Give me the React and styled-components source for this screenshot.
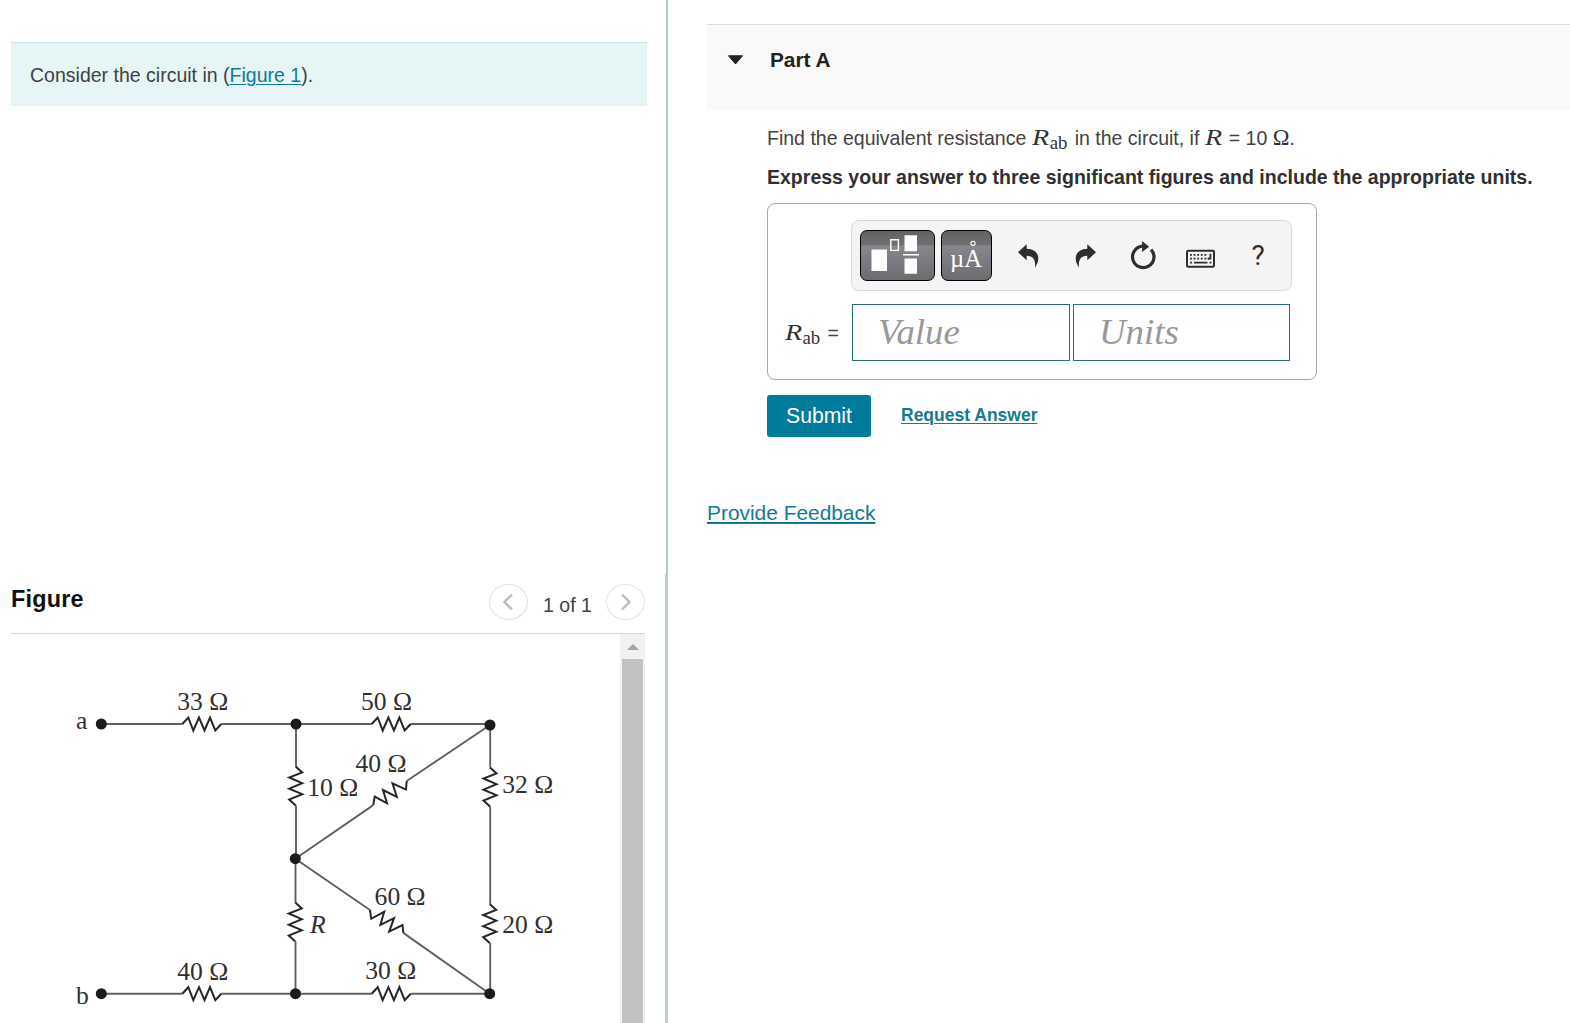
import React from 'react'
import styled, { createGlobalStyle } from 'styled-components'

const GlobalStyle = createGlobalStyle`
  * {
    box-sizing: border-box;
  }

  body {
    margin: 0;
    background: #fff;
    color: #424242;
    font-family: 'Liberation Sans', Arial, sans-serif;
    font-size: 19.52px;
    overflow: hidden;
  }

  p {
    margin: 0;
  }
`

const Page = styled.div`
  display: flex;
  width: 1570px;
  height: 1023px;
`

const LeftPane = styled.div`
  display: flex;
  flex-direction: column;
  width: 665px;
  padding-left: 11px;
`

const Divider = styled.div`
  width: 3px;

  &::before {
    content: '';
    display: block;
    width: 2px;
    height: 574px;
    margin-left: 1px;
    background: #b5cad8;
  }

  &::after {
    content: '';
    display: block;
    height: 449px;
    background: #b8ccda;
  }
`

const Intro = styled.div`
  width: 636px;
  height: 64px;
  margin-top: 42px;
  padding: 20px 19px;
  border-top: 1px solid #cfe3e3;
  background: #e6f5f6;
  line-height: 24px;
`

const Link = styled.a`
  color: #127a96;
  text-decoration: underline;
  text-decoration-thickness: 1px;
  text-underline-offset: 2px;
`

const FigureHeader = styled.div`
  display: flex;
  align-items: flex-start;
  width: 634px;
  height: 50px;
  margin-top: 478px;
  border-bottom: 1px solid #d6d6d6;
`

const FigureTitle = styled.div`
  flex: 1;
  color: #111;
  font-size: 23.4px;
  font-weight: bold;
  letter-spacing: 0.2px;
  line-height: 30px;
`

const Pager = styled.div`
  display: flex;
  align-items: center;
`

const PagerCount = styled.div`
  width: 78px;
  padding: 6px 0 0 1px;
  text-align: center;
`

const PagerButton = styled.button`
  display: flex;
  align-items: center;
  justify-content: center;
  width: 39px;
  height: 36px;
  padding: ${props => (props.$next ? '0 0 0 1px' : '0 1px 0 0')};
  border: 1px solid #e2e2e2;
  border-radius: 50%;
  background: #fff;
`

const FigureView = styled.div`
  display: flex;
  width: 634px;
  height: 389px;
`

const Scrollbar = styled.div`
  display: flex;
  flex-direction: column;
  align-items: center;
  width: 25px;
  background: #f1f1f1;
`

const ScrollUp = styled.div`
  display: flex;
  justify-content: center;
  height: 25px;
  padding-top: 10px;
`

const ScrollThumb = styled.div`
  flex: 1;
  width: 21px;
  background: #c1c1c1;
`

const RightPane = styled.div`
  flex: 1;
  padding-left: 39px;
`

const PartHeader = styled.div`
  display: flex;
  height: 86px;
  margin-top: 24px;
  padding: 22px 0 0 20px;
  border-top: 1px solid #dcdcdc;
  background: #f9f9f9;
  color: #222;
  font-size: 20.8px;
  font-weight: bold;
  line-height: 25px;

  & > svg {
    margin: 8px 26px 0 0;
  }
`

const PartBody = styled.div`
  padding: 15px 0 0 60px;
`

const Question = styled.p`
  height: 26px;
  line-height: 26px;
  white-space: nowrap;
`

const Instruction = styled(Question)`
  margin-top: 13px;
  color: #303030;
  font-weight: bold;
`

const MathVar = styled.i`
  display: inline-block;
  width: ${props => props.$width || 18.5}px;
  color: #333;
  font-family: 'Liberation Serif', serif;
  font-size: 22.5px;
  line-height: 20px;
  transform: scaleX(1.25);
  transform-origin: left;
`

const MathSub = styled.span`
  display: inline-block;
  position: relative;
  top: 3.6px;
  width: 19.5px;
  color: #333;
  font-family: 'Liberation Serif', serif;
  font-size: 18.8px;
  line-height: 16px;
`

const Omega = styled.span`
  color: #333;
  font-family: 'Liberation Serif', serif;
  font-size: 22.5px;
  line-height: 20px;
`

const AnswerBox = styled.div`
  width: 550px;
  height: 177px;
  margin-top: 13px;
  padding-top: 16px;
  border: 1px solid #a8a8a8;
  border-radius: 8px;
`

const Toolbar = styled.div`
  display: flex;
  align-items: flex-start;
  width: 441px;
  height: 71px;
  margin-left: 83px;
  padding: 9px 8px;
  border: 1px solid #d8d8d8;
  border-radius: 8px;
  background: #f4f4f4;
`

const PaletteButton = styled.button`
  width: ${props => props.$width}px;
  height: 51px;
  margin-right: 6px;
  padding: 0;
  border: 1px solid #000;
  border-radius: 7px;
  background: linear-gradient(
    #626262 0,
    #707070 14px,
    #88878d 15px,
    #6c6b70 100%
  );

  & > svg {
    display: block;
  }
`

const ToolIcons = styled.div`
  display: grid;
  grid-template-columns: 58px 57px 58px 56px 60px;
  align-items: start;
  justify-items: center;
  margin-left: 1px;
`

const Help = styled.div`
  padding-top: 11px;
  color: #2d2d2d;
  font-family: Roboto, 'Liberation Sans', sans-serif;
  font-size: 28px;
  line-height: 30px;
`

const AnswerRow = styled.div`
  display: flex;
  margin: 13px 0 0 17px;
`

const AnswerLabel = styled.div`
  width: 67px;
  padding-top: 16px;
  line-height: 26px;
  white-space: nowrap;
`

const Field = styled.input`
  width: ${props => props.$width}px;
  height: 57px;
  margin-right: 3px;
  padding: 0 24px 3px 25px;
  border: 1px solid #24717e;
  border-radius: 0;
  background: #fff;
  font-family: 'Liberation Serif', serif;
  font-size: 36.8px;
  font-style: italic;

  &::placeholder {
    color: #999;
    opacity: 1;
  }
`

const Actions = styled.div`
  display: flex;
  margin-top: 15px;
`

const Submit = styled.button`
  width: 104px;
  height: 42px;
  padding: 0;
  border: 0;
  border-radius: 3px;
  background: #007b9c;
  color: #fff;
  font-family: inherit;
  font-size: 21.2px;
`

const RequestLink = styled(Link)`
  margin: 8px 0 0 30px;
  color: #147a8c;
  font-size: 17.5px;
  font-weight: bold;
  line-height: 24px;
`

const Feedback = styled(Link)`
  display: inline-block;
  margin-top: 64px;
  font-size: 20.9px;
  line-height: 24px;
  text-decoration-thickness: 2px;
`

const ZIGZAG = 'M0 0L6 -6.5L11 6.5L16.7 -6.5L22.2 6.5L27.7 -6.5L33 6.5L39 0'

const WIRES = [
  'M101 724H182.3M221.3 724H371.7M410.7 724H490',
  'M101 993.7H182.3M221.3 993.7H371.7M410.7 993.7H490',
  'M296 724V766.5M296 805.5V858.7',
  'M295.5 858.7V902.5M295.5 941.5V993.7',
  'M490.2 725V767.5M490.2 806.5V904M490.2 943V993.7',
  'M295.3 858.7L373.3 805.1M406.7 781L490 725',
  'M295.3 858.7L370 910M403.3 932.9L489.7 993.7',
]

const RESISTORS = [
  'translate(182.3 724)',
  'translate(371.7 724)',
  'translate(182.3 993.7)',
  'translate(371.7 993.7)',
  'translate(295.7 766.5) rotate(90)',
  'translate(295.3 902.5) rotate(90)',
  'translate(490 767.5) rotate(90)',
  'translate(489.7 904) rotate(90)',
]

// the slanted resistors lean a little, so they have their own points
const SLANTED = [
  'M373.3 805L374.7 796.5L387 803.3L383 790L396.8 796.8L392.5 783.3L406 789.6L406.7 781',
  'M370 910L371.2 918.8L384.2 911.8L380.4 924.8L394 918.2L389.2 931.6L402.5 925L403.3 932.9',
]

const NODES = [
  [101.3, 724],
  [296, 724],
  [490, 725],
  [295.3, 858.7],
  [101.3, 993.7],
  [295.5, 993.7],
  [489.7, 993.7],
]

const LABELS = [
  { x: 76, y: 728.7, text: 'a' },
  { x: 76, y: 1004, text: 'b' },
  { x: 177.3, y: 710.4, text: '33 Ω' },
  { x: 361, y: 710.4, text: '50 Ω' },
  { x: 355.4, y: 772.1, text: '40 Ω' },
  { x: 307.2, y: 795.8, text: '10 Ω' },
  { x: 502.2, y: 793.1, text: '32 Ω' },
  { x: 374.6, y: 904.8, text: '60 Ω' },
  { x: 310, y: 932.7, text: 'R', italic: true },
  { x: 502.2, y: 932.5, text: '20 Ω' },
  { x: 365.3, y: 979.4, text: '30 Ω' },
  { x: 177.3, y: 980.4, text: '40 Ω' },
]

const CircuitLabel = styled.text`
  fill: #303030;
  font-family: 'Liberation Serif', serif;
  font-size: 25.6px;
  font-style: ${props => (props.$italic ? 'italic' : 'normal')};
`

function Circuit() {
  return (
    <svg width="609" height="389" viewBox="11 634 609 389">
      <path d={WIRES.join('')} fill="none" stroke="#606060" strokeWidth="1.9" />
      {RESISTORS.map(transform => (
        <path
          key={transform}
          d={ZIGZAG}
          transform={transform}
          fill="none"
          stroke="#262626"
          strokeWidth="2"
        />
      ))}
      <path d={SLANTED.join('')} fill="none" stroke="#262626" strokeWidth="2" />
      {NODES.map(([x, y]) => (
        <circle key={`${x}-${y}`} cx={x} cy={y} r="5.5" fill="#1c1a1b" />
      ))}
      {LABELS.map(({ x, y, text, italic }) => (
        <CircuitLabel key={`${x}-${y}`} x={x} y={y} $italic={italic}>
          {text}
        </CircuitLabel>
      ))}
    </svg>
  )
}

function Chevron({ right }) {
  return (
    <svg width="10" height="18" viewBox="0 0 10 18">
      <path
        d={right ? 'M1 1.5L8.5 9L1 16.5' : 'M9 1.5L1.5 9L9 16.5'}
        fill="none"
        stroke="#bdbdbd"
        strokeWidth="2.4"
      />
    </svg>
  )
}

function TemplateIcon() {
  return (
    <svg width="73" height="49" viewBox="861 231 73 49">
      <path
        d="M871.5 249.5h15.5v21.5h-15.5zM904.5 235.3h12.5v16h-12.5zM904.5 258.5h12.5v15.2h-12.5zM903 254h16v1.6h-16z"
        fill="#fff"
      />
      <path d="M890.8 239.8h7.6v10.6h-7.6z" fill="none" stroke="#fff" strokeWidth="1.4" />
    </svg>
  )
}

function UnitsIcon() {
  return (
    <svg width="49" height="49" viewBox="942 231 49 49">
      <text
        x="950"
        y="267"
        fill="#fff"
        fontFamily="Liberation Serif, serif"
        fontSize="26"
        textLength="32"
        lengthAdjust="spacingAndGlyphs"
      >
        µA
      </text>
      <circle cx="973" cy="243.3" r="2.1" fill="none" stroke="#fff" strokeWidth="1.1" />
    </svg>
  )
}

function ArrowIcon({ flip }) {
  return (
    <svg
      width="21"
      height="38"
      viewBox="0 -14 21 38"
      transform={flip ? 'scale(-1 1)' : undefined}
    >
      <path
        d="M0 8.3L8.7 0.2V4.8C15.5 5 20.3 8.5 20.3 14.5C20.3 18.5 18.5 21 17 23.7C17.8 17 16 11.9 8.7 11.8V16.2Z"
        fill="#2d2d2d"
      />
    </svg>
  )
}

function ResetIcon() {
  return (
    <svg width="26" height="40" viewBox="1130.5 230.5 26 40">
      <path
        d="M1151.6 250.1A10.7 10.7 0 1 1 1143.3 246.7"
        fill="none"
        stroke="#2d2d2d"
        strokeWidth="3.2"
      />
      <path d="M1142.6 241.4L1149.6 247.2L1142.6 252.6Z" fill="#2d2d2d" />
    </svg>
  )
}

function KeyboardIcon() {
  return (
    <svg width="29" height="39" viewBox="1186 230.7 29 39">
      <rect
        x="1187"
        y="251.5"
        width="27"
        height="16"
        rx="1.2"
        fill="none"
        stroke="#2d2d2d"
        strokeWidth="2"
      />
      <path
        d="M1190 255.5H1207M1190 259.3H1209M1190 263.3H1192M1209.5 263.3H1211.5"
        stroke="#2d2d2d"
        strokeWidth="1.8"
        strokeDasharray="1.9 1.7"
      />
      <path
        d="M1194 263.3H1207.5M1207.6 259.3H1210.4V254.5"
        fill="none"
        stroke="#2d2d2d"
        strokeWidth="1.8"
      />
    </svg>
  )
}

function FigurePanel() {
  return (
    <>
      <FigureHeader>
        <FigureTitle>Figure</FigureTitle>
        <Pager>
          <PagerButton aria-label="Previous figure">
            <Chevron />
          </PagerButton>
          <PagerCount>1 of 1</PagerCount>
          <PagerButton $next aria-label="Next figure">
            <Chevron right />
          </PagerButton>
        </Pager>
      </FigureHeader>
      <FigureView>
        <Circuit />
        <Scrollbar>
          <ScrollUp>
            <svg width="12" height="6" viewBox="0 0 12 6">
              <path d="M6 0L12 6H0Z" fill="#a3a3a3" />
            </svg>
          </ScrollUp>
          <ScrollThumb />
        </Scrollbar>
      </FigureView>
    </>
  )
}

function AnswerPanel() {
  return (
    <AnswerBox>
      <Toolbar>
        <PaletteButton $width={75} aria-label="Templates">
          <TemplateIcon />
        </PaletteButton>
        <PaletteButton $width={51} aria-label="Units">
          <UnitsIcon />
        </PaletteButton>
        <ToolIcons>
          <ArrowIcon />
          <ArrowIcon flip />
          <ResetIcon />
          <KeyboardIcon />
          <Help>?</Help>
        </ToolIcons>
      </Toolbar>
      <AnswerRow>
        <AnswerLabel>
          <MathVar $width={17.5}>R</MathVar>
          <MathSub>ab</MathSub> =
        </AnswerLabel>
        <Field $width={218} placeholder="Value" />
        <Field $width={217} placeholder="Units" />
      </AnswerRow>
    </AnswerBox>
  )
}

function App() {
  return (
    <Page>
      <GlobalStyle />
      <LeftPane>
        <Intro>
          Consider the circuit in (<Link>Figure 1</Link>).
        </Intro>
        <FigurePanel />
      </LeftPane>
      <Divider />
      <RightPane>
        <PartHeader>
          <svg width="17" height="10" viewBox="0 0 17 10">
            <path d="M1.5 0.8H15.5L8.5 9Z" fill="#222" stroke="#222" strokeLinejoin="round" />
          </svg>
          Part A
        </PartHeader>
        <PartBody>
          <Question>
            Find the equivalent resistance <MathVar $width={18}>R</MathVar>
            <MathSub>ab</MathSub> in the circuit, if <MathVar>R</MathVar> = 10{' '}
            <Omega>Ω</Omega>.
          </Question>
          <Instruction>
            Express your answer to three significant figures and include the
            appropriate units.
          </Instruction>
          <AnswerPanel />
          <Actions>
            <Submit>Submit</Submit>
            <RequestLink>Request Answer</RequestLink>
          </Actions>
        </PartBody>
        <Feedback>Provide Feedback</Feedback>
      </RightPane>
    </Page>
  )
}

export default App
